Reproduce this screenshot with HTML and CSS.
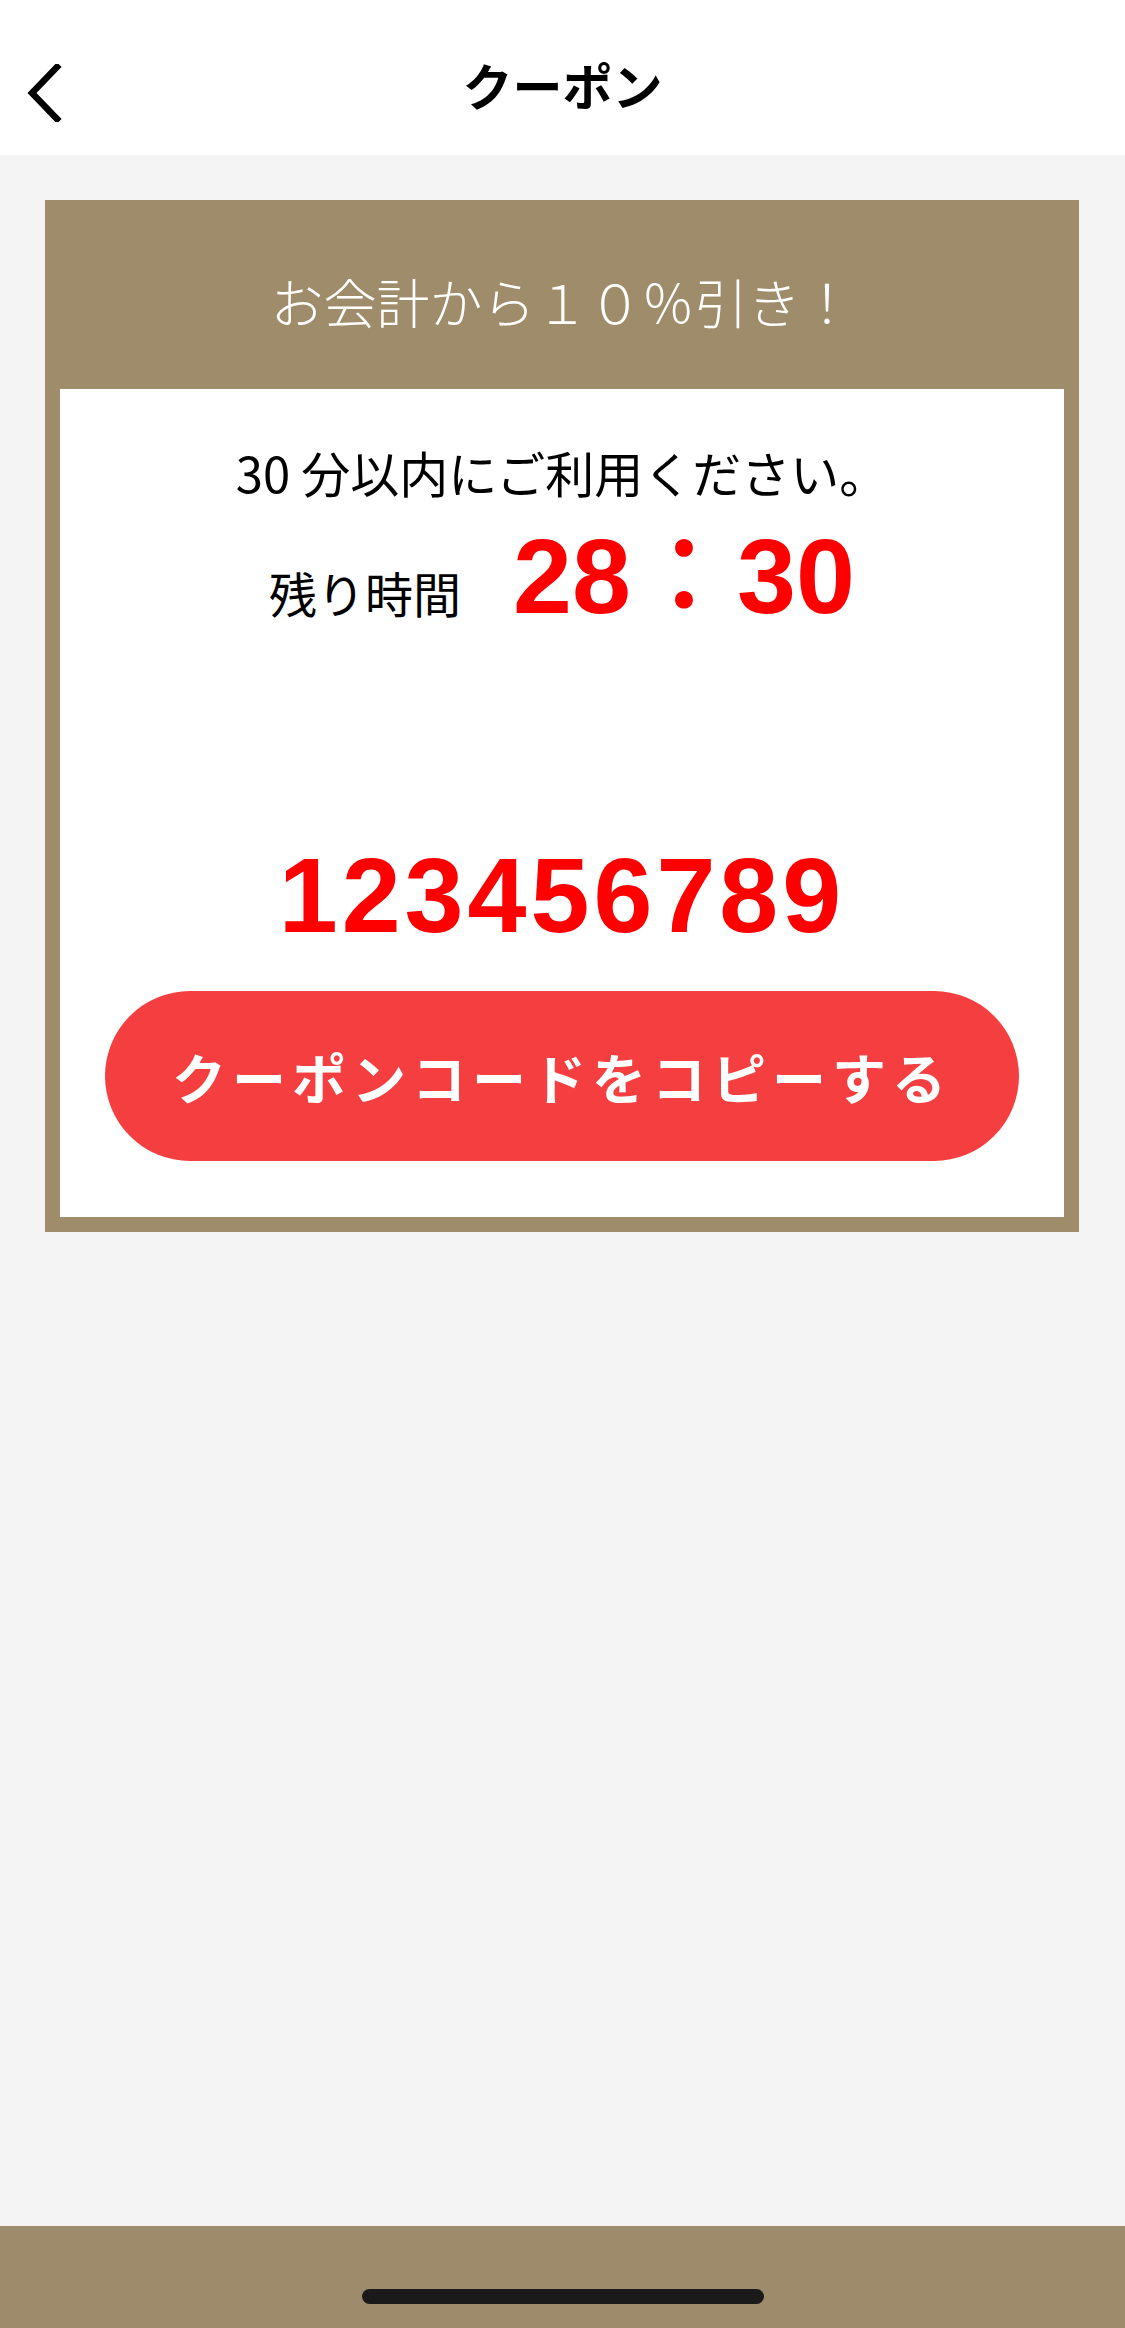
FILE: index.html
```html
<!DOCTYPE html>
<html lang="ja">
  <head>
    <meta charset="utf-8">
    <title>クーポン</title>
    <meta name="viewport" content="width=device-width, initial-scale=1.0">
    <link rel="stylesheet" href="styles.css">
  </head>
  <body>
    <header class="nav">
      <a class="nav-back" href="#" aria-label="戻る">
        <svg width="36" height="58" viewBox="0 0 36 58" aria-hidden="true">
          <path d="M31 3 L6 29 L31 55" fill="none" stroke="#000" stroke-width="6.5" stroke-linecap="square" stroke-linejoin="miter"/>
        </svg>
      </a>
      <h1 class="nav-title">クーポン</h1>
    </header>

    <main class="content">
      <section class="coupon">
        <h2 class="coupon-title">お会計から１０％引き！</h2>
        <div class="coupon-body">
          <p class="coupon-note">30 分以内にご利用ください。</p>
          <p class="coupon-timer">
            <span class="timer-label">残り時間</span>
            <span class="timer-value">28<span class="timer-colon">：</span>30</span>
          </p>
          <p class="coupon-code">123456789</p>
          <button class="copy-button" type="button">クーポンコードをコピーする</button>
        </div>
      </section>
    </main>

    <footer class="tabbar">
      <span class="home-indicator"></span>
    </footer>
  </body>
</html>
```

FILE: styles.css
```css
html {
  box-sizing: border-box;
}

*,
*:before,
*:after {
  box-sizing: inherit;
}

body {
  margin: 0;
  min-height: 100vh;
  display: flex;
  flex-direction: column;
  background: #f4f4f4;
  color: #000;
  font-family: "Noto Sans CJK JP", "Noto Sans", sans-serif;
}

.nav {
  position: relative;
  height: 155px;
  background: #fff;
  display: flex;
  align-items: center;
  justify-content: center;
}

.nav-back {
  position: absolute;
  left: 26px;
  top: 64px;
  display: block;
  width: 36px;
  height: 58px;
}

.nav-back svg {
  display: block;
}

.nav-title {
  margin: 0;
  font-size: 50px;
  font-weight: 700;
  line-height: 1;
  padding-top: 12px;
}

.content {
  flex: 1;
  padding: 45px 46px 0 45px;
}

.coupon {
  background: #9f8c6b;
  padding: 0 15px 15px;
}

.coupon-title {
  margin: 0;
  height: 189px;
  display: flex;
  align-items: center;
  justify-content: center;
  color: #fff;
  font-size: 53px;
  font-weight: 300;
  padding-top: 12px;
}

.coupon-body {
  background: #fff;
  padding: 53px 45px 56px;
  text-align: center;
}

.coupon-note {
  margin: 0;
  font-size: 49px;
  line-height: 60px;
}

/* numbers are set in an Arial-width face, like the Helvetica-style digits of the app */
.coupon-timer {
  margin: 9px 0 0;
  display: flex;
  justify-content: center;
  align-items: baseline;
  gap: 52px;
  height: 123px;
}

.timer-label {
  font-size: 48px;
}

.timer-value {
  color: #ff0000;
  font-family: "Liberation Sans", "Noto Sans CJK JP", sans-serif;
  font-size: 106px;
  font-weight: 700;
  line-height: 112px;
}

.timer-colon {
  font-family: "Noto Sans CJK JP", sans-serif;
  font-weight: 500;
}

.coupon-code {
  margin: 0;
  padding-top: 205px;
  color: #ff0000;
  font-family: "Liberation Sans", sans-serif;
  font-size: 106px;
  font-weight: 700;
  line-height: 112px;
  letter-spacing: 4px;
}

.copy-button {
  display: block;
  width: 100%;
  height: 170px;
  margin-top: 40px;
  border: 0;
  border-radius: 85px;
  background: #f53e3f;
  color: #fff;
  font-family: inherit;
  font-size: 54px;
  font-weight: 700;
  letter-spacing: 6px;
}

.tabbar {
  height: 102px;
  background: #9e8b6b;
  display: flex;
  justify-content: center;
  padding-top: 63px;
}

.home-indicator {
  display: block;
  width: 402px;
  height: 15px;
  border-radius: 8px;
  background: #1a1a1a;
}
```
